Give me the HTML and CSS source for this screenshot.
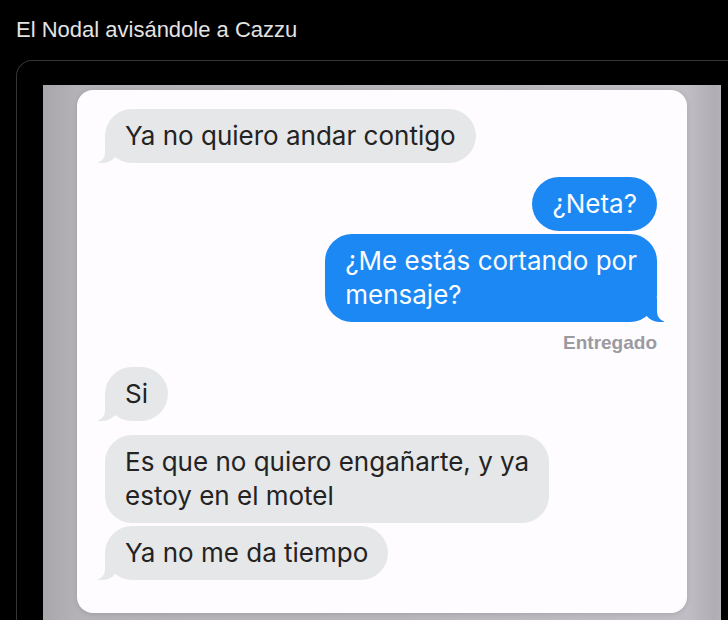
FILE: index.html
```html
<!DOCTYPE html>
<html lang="es">
<head>
    <meta charset="UTF-8">
    <meta name="viewport" content="width=device-width, initial-scale=1.0">
    <title>El Nodal avisándole a Cazzu</title>
    <link rel="stylesheet" href="styles.css">
</head>
<body>
    <div class="post">
        <p class="post-text">El Nodal avisándole a Cazzu</p>

        <div class="media">
            <div class="shot">
                <div class="chat">
                    <div class="msg in tail">Ya no quiero andar contigo</div>

                    <div class="msg out">¿Neta?</div>
                    <div class="msg out tail">¿Me estás cortando por<br>mensaje?</div>
                    <div class="status">Entregado</div>

                    <div class="msg in tail">Si</div>

                    <div class="msg in">Es que no quiero engañarte, y ya<br>estoy en el motel</div>
                    <div class="msg in tail">Ya no me da tiempo</div>
                </div>
            </div>
        </div>
    </div>
</body>
</html>
```

FILE: styles.css
```css
body {
    margin: 0;
    background-color: #000;
    font-family: 'Liberation Sans', Arial, sans-serif;
    overflow: hidden;
}

.post {
    padding: 0 0 0 16px;
}

.post-text {
    margin: 0;
    padding-top: 16px;
    font-size: 22px;
    line-height: 27px;
    color: #e3e3e3;
}

/* tarjeta de la imagen, se sale por la derecha */
.media {
    margin-top: 17px;
    margin-right: -24px;
    padding: 24px 30px 0 26px;
    border: 1px solid #333538;
    border-bottom: none;
    border-radius: 16px 16px 0 0;
}

.shot {
    padding: 5px 34px 7px 34px;
    background: linear-gradient(90deg, #a9a6ac 0%, #b4b1b7 5%, #b8b5bb 50%, #c0bec4 95%, #b0aeb4 99%, #b4b2b8 100%);
}

.chat {
    display: flex;
    flex-direction: column;
    align-items: flex-start;
    padding: 19px 30px 33px 28px;
    background-color: #fefcff;
    border-radius: 16px;
    box-shadow: 0 1px 5px rgba(0, 0, 0, 0.12);
}

.msg {
    position: relative;
    padding: 10px 20px;
    font-family: 'Inter', 'Liberation Sans', sans-serif;
    font-size: 26px;
    line-height: 34px;
    border-radius: 27px;
}

.msg.in {
    background-color: #e6e7e8;
    color: #232323;
}

.msg.out {
    align-self: flex-end;
    background-color: #1c88f3;
    color: #fafcff;
}

/* espacio entre grupos y dentro de un grupo */
.msg + .msg {
    margin-top: 3px;
}

.msg.tail + .msg {
    margin-top: 14px;
}

.status + .msg {
    margin-top: 13px;
}

/* colita estilo iMessage */
.msg.tail::before,
.msg.tail::after {
    content: "";
    position: absolute;
    bottom: 0;
    height: 24px;
}

.msg.in.tail::before {
    left: -7px;
    width: 20px;
    background-color: #e6e7e8;
    border-bottom-right-radius: 16px 14px;
}

.msg.in.tail::after {
    left: -26px;
    width: 26px;
    background-color: #fefcff;
    border-bottom-right-radius: 10px;
}

.msg.out.tail::before {
    right: -7px;
    width: 20px;
    background-color: #1c88f3;
    border-bottom-left-radius: 16px 14px;
}

.msg.out.tail::after {
    right: -26px;
    width: 26px;
    background-color: #fefcff;
    border-bottom-left-radius: 10px;
}

.status {
    align-self: flex-end;
    margin-top: 10px;
    font-size: 19px;
    font-weight: bold;
    line-height: 22px;
    color: #9b9a9f;
}
```
